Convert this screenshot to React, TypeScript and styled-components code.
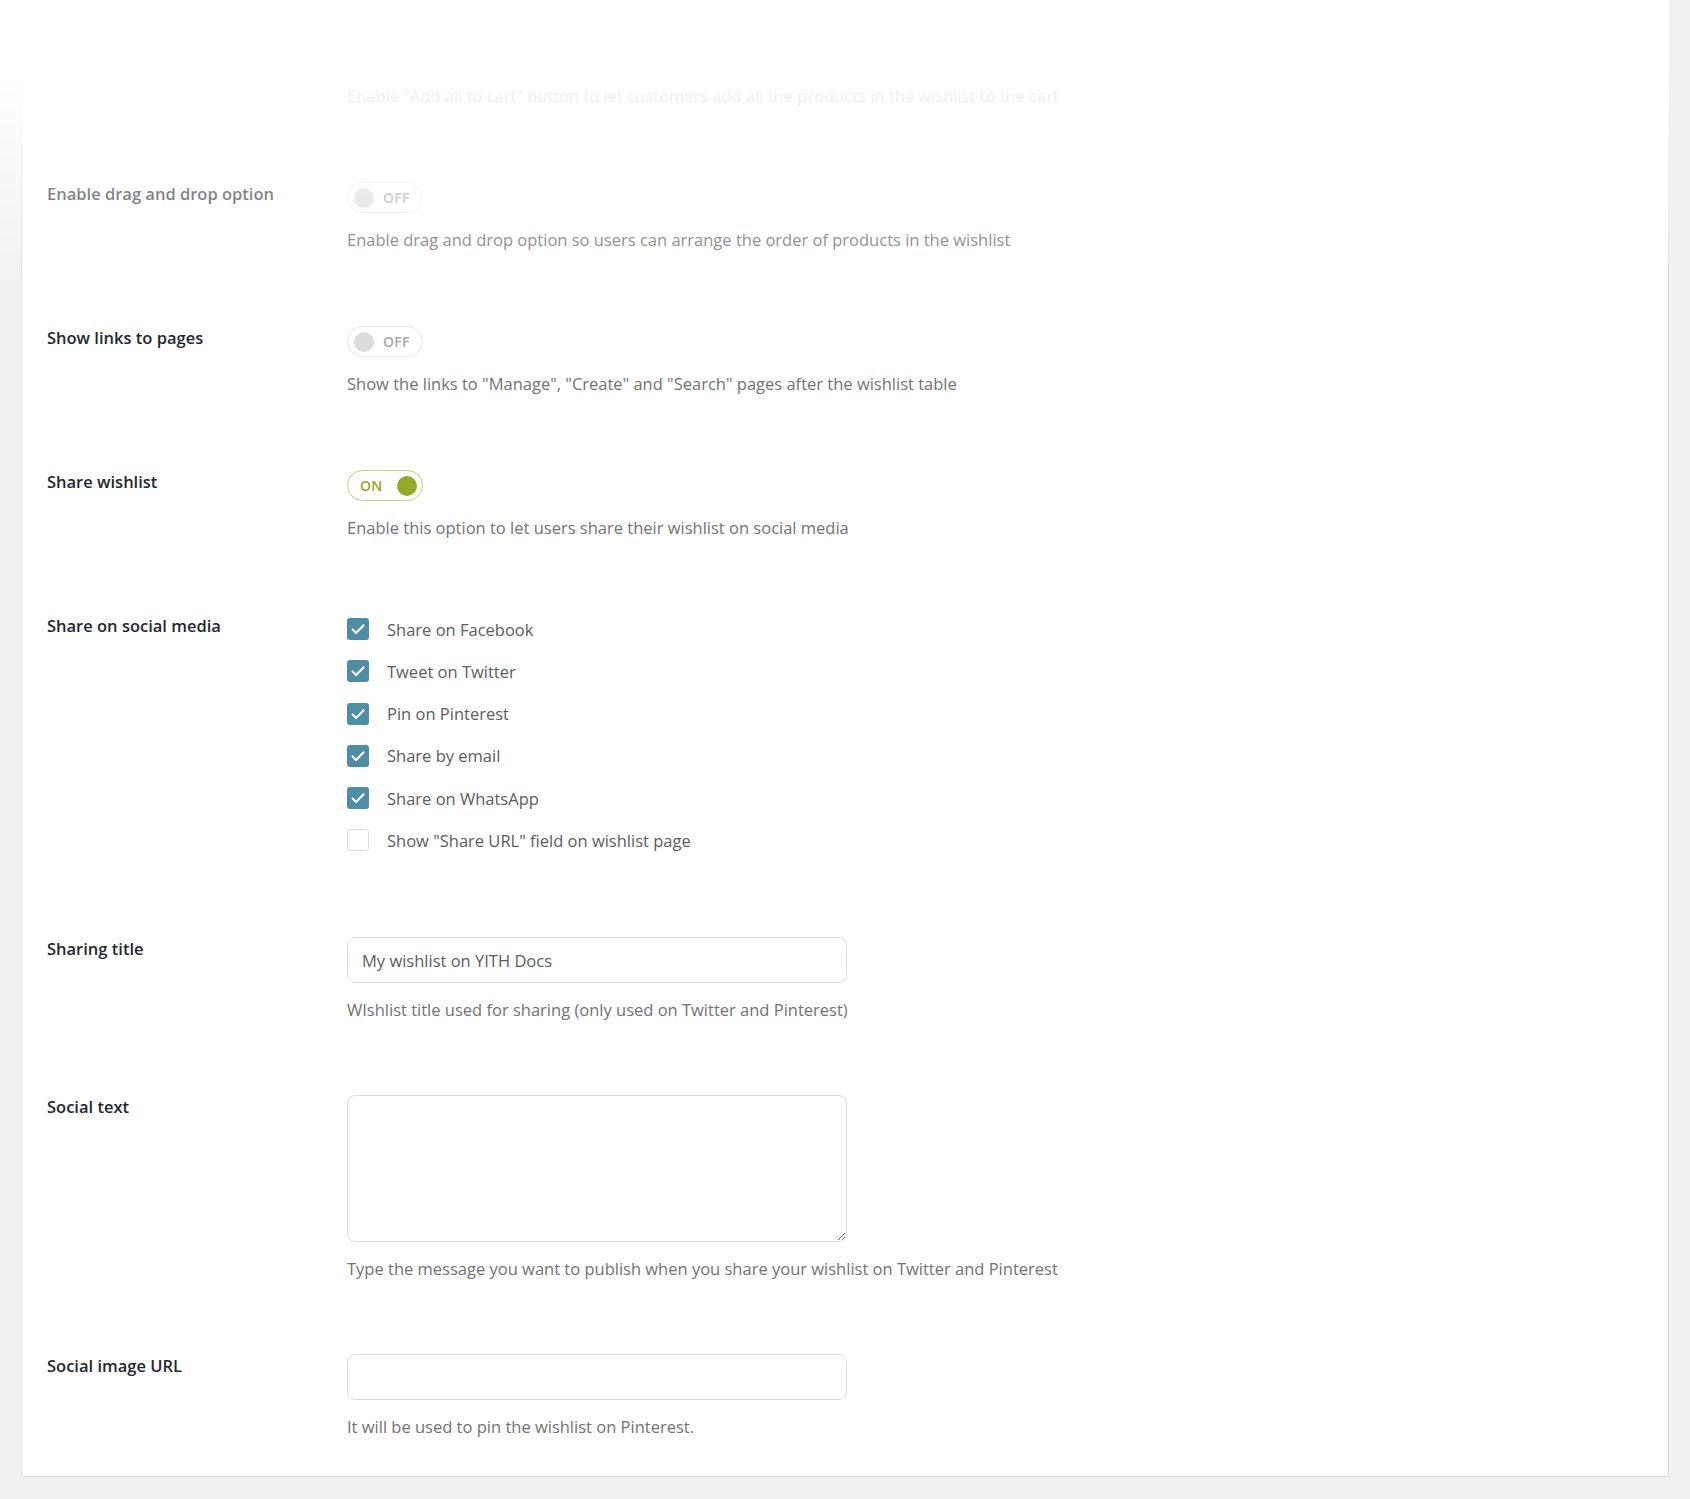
import styled, { createGlobalStyle, css } from 'styled-components';

const GlobalStyle = createGlobalStyle`
  html, body {
    margin: 0;
    padding: 0;
    background: #f1f1f1;
    font-family: "Open Sans", "Noto Sans", Arial, sans-serif;
  }
`;

const Page = styled.div`
  position: relative;
  min-height: 1499px;
  padding-left: 21px;
  width: 1648px;
`;

const Panel = styled.div`
  background: #fff;
  border: 1px solid #dcdcdc;
  border-top: none;
  padding: 38px 0 37px 25px;
  display: flex;
  flex-direction: column;
`;

// white fade that covers the top of the panel
const TopFade = styled.div`
  position: absolute;
  top: 0;
  left: 0;
  right: 0;
  height: 290px;
  pointer-events: none;
  background: linear-gradient(
    rgba(255, 255, 255, 1) 0px,
    rgba(255, 255, 255, 1) 70px,
    rgba(255, 255, 255, 0) 290px
  );
`;

const Row = styled.div<{ $bottom?: number }>`
  display: grid;
  grid-template-columns: 300px 1fr;
  align-items: start;
  padding-bottom: ${(p) => p.$bottom ?? 74}px;
`;

const Label = styled.div`
  font-size: 16.5px;
  font-weight: 600;
  line-height: 24px;
  color: #23282d;
`;

const Field = styled.div`
  display: flex;
  flex-direction: column;
  align-items: flex-start;
`;

const Description = styled.div`
  margin-top: 15px;
  font-size: 16.5px;
  line-height: 24px;
  color: #727272;
`;

const Toggle = styled.div<{ $on?: boolean }>`
  box-sizing: border-box;
  width: 76px;
  height: 31px;
  border-radius: 16px;
  display: flex;
  align-items: center;
  padding: 0 6px;
  gap: 9px;
  font-size: 14px;
  font-weight: 600;
  letter-spacing: 0.3px;
  ${(p) =>
    p.$on
      ? css`
          border: 1.5px solid #c3d27e;
          color: #93a62b;
          flex-direction: row-reverse;
          justify-content: space-between;
          padding: 0 5px 0 12px;
        `
      : css`
          border: 1.5px solid #e6e6e6;
          color: #a8a8a8;
        `}
`;

const Knob = styled.span<{ $on?: boolean }>`
  width: 20px;
  height: 20px;
  border-radius: 50%;
  background: ${(p) => (p.$on ? '#95aa28' : '#dcdcdc')};
`;

const Options = styled.div`
  display: flex;
  flex-direction: column;
  gap: 14.3px;
  padding-top: 1px;
`;

const Option = styled.label`
  display: flex;
  align-items: center;
  gap: 18px;
  height: 28px;
  font-size: 16.5px;
  color: #5c5c5c;
`;

const Box = styled.span<{ $checked?: boolean }>`
  box-sizing: border-box;
  width: 22px;
  height: 22px;
  border-radius: 3px;
  display: flex;
  align-items: center;
  justify-content: center;
  ${(p) =>
    p.$checked
      ? css`
          background: #4f8da6;
        `
      : css`
          background: #fff;
          border: 1px solid #dcdcdc;
        `}
`;

const TextInput = styled.input`
  box-sizing: border-box;
  width: 500px;
  height: 46px;
  border: 1px solid #dcdcdc;
  border-radius: 8px;
  padding: 0 14px;
  font-family: inherit;
  font-size: 16.5px;
  color: #5c5c5c;
  background: #fff;
  outline: none;
`;

const TextArea = styled.textarea`
  box-sizing: border-box;
  width: 500px;
  height: 147px;
  border: 1px solid #dcdcdc;
  border-radius: 8px;
  padding: 10px 14px;
  font-family: inherit;
  font-size: 16.5px;
  color: #5c5c5c;
  background: #fff;
  outline: none;
  resize: vertical;
  display: block;
`;

const Check = () => (
  <svg width="16" height="16" viewBox="0 0 16 16" fill="none">
    <path d="M2.5 8.4l3.6 3.6L13.6 4.2" stroke="#fff" strokeWidth="2" strokeLinecap="round" strokeLinejoin="round" />
  </svg>
);

const OnOff = ({ on }: { on?: boolean }) => (
  <Toggle $on={on}>
    <Knob $on={on} />
    <span>{on ? 'ON' : 'OFF'}</span>
  </Toggle>
);

const socials = [
  { label: 'Share on Facebook', checked: true },
  { label: 'Tweet on Twitter', checked: true },
  { label: 'Pin on Pinterest', checked: true },
  { label: 'Share by email', checked: true },
  { label: 'Share on WhatsApp', checked: true },
  { label: 'Show "Share URL" field on wishlist page', checked: false },
];

export default function App() {
  return (
    <Page>
      <GlobalStyle />
      <Panel>
        <Row>
          <Label>Enable "Add all to cart"</Label>
          <Field>
            <OnOff />
            <Description>
              Enable "Add all to cart" button to let customers add all the products in the wishlist to the cart
            </Description>
          </Field>
        </Row>
        <Row>
          <Label>Enable drag and drop option</Label>
          <Field>
            <OnOff />
            <Description>Enable drag and drop option so users can arrange the order of products in the wishlist</Description>
          </Field>
        </Row>
        <Row>
          <Label>Show links to pages</Label>
          <Field>
            <OnOff />
            <Description>Show the links to "Manage", "Create" and "Search" pages after the wishlist table</Description>
          </Field>
        </Row>
        <Row>
          <Label>Share wishlist</Label>
          <Field>
            <OnOff on />
            <Description>Enable this option to let users share their wishlist on social media</Description>
          </Field>
        </Row>
        <Row $bottom={83}>
          <Label>Share on social media</Label>
          <Options>
            {socials.map((s) => (
              <Option key={s.label}>
                <Box $checked={s.checked}>{s.checked && <Check />}</Box>
                {s.label}
              </Option>
            ))}
          </Options>
        </Row>
        <Row $bottom={73}>
          <Label>Sharing title</Label>
          <Field>
            <TextInput defaultValue="My wishlist on YITH Docs" />
            <Description>WIshlist title used for sharing (only used on Twitter and Pinterest)</Description>
          </Field>
        </Row>
        <Row $bottom={73}>
          <Label>Social text</Label>
          <Field>
            <TextArea />
            <Description>Type the message you want to publish when you share your wishlist on Twitter and Pinterest</Description>
          </Field>
        </Row>
        <Row $bottom={0}>
          <Label>Social image URL</Label>
          <Field>
            <TextInput />
            <Description>It will be used to pin the wishlist on Pinterest.</Description>
          </Field>
        </Row>
      </Panel>
      <TopFade />
    </Page>
  );
}
